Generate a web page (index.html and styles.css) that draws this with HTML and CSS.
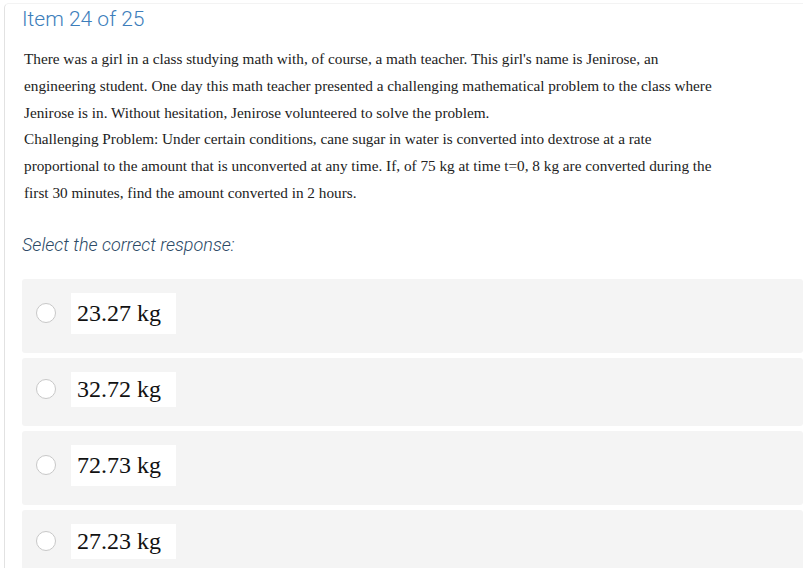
FILE: index.html
```html
<!DOCTYPE html>
<html>
<head>
<meta charset="utf-8">
<link rel="stylesheet" href="styles.css">
</head>
<body>
<div class="panel">
  <h1 class="item-title">Item 24 of 25</h1>
  <div class="question">
    <p>There was a girl in a class studying math with, of course, a math teacher. This girl's name is Jenirose, an<br>engineering student. One day this math teacher presented a challenging mathematical problem to the class where<br>Jenirose is in. Without hesitation, Jenirose volunteered to solve the problem.</p>
    <p>Challenging Problem: Under certain conditions, cane sugar in water is converted into dextrose at a rate<br>proportional to the amount that is unconverted at any time. If, of 75 kg at time t=0, 8 kg are converted during the<br>first 30 minutes, find the amount converted in 2 hours.</p>
  </div>
  <div class="prompt">Select the correct response:</div>
  <div class="options">
    <div class="option">
      <span class="radio"></span>
      <span class="label label-tall">23.27 kg</span>
    </div>
    <div class="option">
      <span class="radio"></span>
      <span class="label label-short">32.72 kg</span>
    </div>
    <div class="option">
      <span class="radio"></span>
      <span class="label label-tall">72.73 kg</span>
    </div>
    <div class="option">
      <span class="radio"></span>
      <span class="label label-short">27.23 kg</span>
    </div>
  </div>
</div>
</body>
</html>
```

FILE: styles.css
```css
html, body {
  margin: 0;
  padding: 0;
  background: #ffffff;
  overflow: hidden;
}

.panel {
  margin: 3px 0 0 4px;
  border-left: 1px solid #e2e2e2;
  border-top: 1px solid #f3f3f3;
  border-top-left-radius: 5px;
  padding: 3px 0 0 17px;
  height: 600px;
}

.item-title {
  margin: 0;
  font-family: Roboto, "Open Sans", sans-serif;
  font-weight: 300;
  font-size: 21px;
  line-height: 24px;
  color: #3d7ebb;
}

.question {
  margin-top: 15px;
  padding-left: 2px;
  font-family: "Liberation Serif", "Times New Roman", serif;
  font-size: 15.25px;
  line-height: 26.8px;
  color: #222222;
}

.question p {
  margin: 0;
  white-space: nowrap;
}

.prompt {
  margin-top: 28px;
  font-family: Roboto, sans-serif;
  font-weight: 300;
  font-style: italic;
  font-size: 18px;
  line-height: 20px;
  color: #2c4a66;
}

.options {
  margin-top: 24px;
  display: flex;
  flex-direction: column;
  gap: 5px;
}

.option {
  display: flex;
  align-items: center;
  background: #f4f4f4;
  border-radius: 3px;
  padding: 14px 0 19px 14px;
}

.radio {
  width: 18px;
  height: 18px;
  border: 1px solid #c8c8c8;
  border-radius: 50%;
  background: #ffffff;
  flex: none;
}

.label {
  margin-left: 15px;
  background: #ffffff;
  font-family: "Liberation Serif", "Times New Roman", serif;
  font-size: 24px;
  color: #111111;
  padding: 0 15px 0 6px;
}

.label-tall {
  line-height: 41px;
}

.label-short {
  line-height: 35px;
}
```
